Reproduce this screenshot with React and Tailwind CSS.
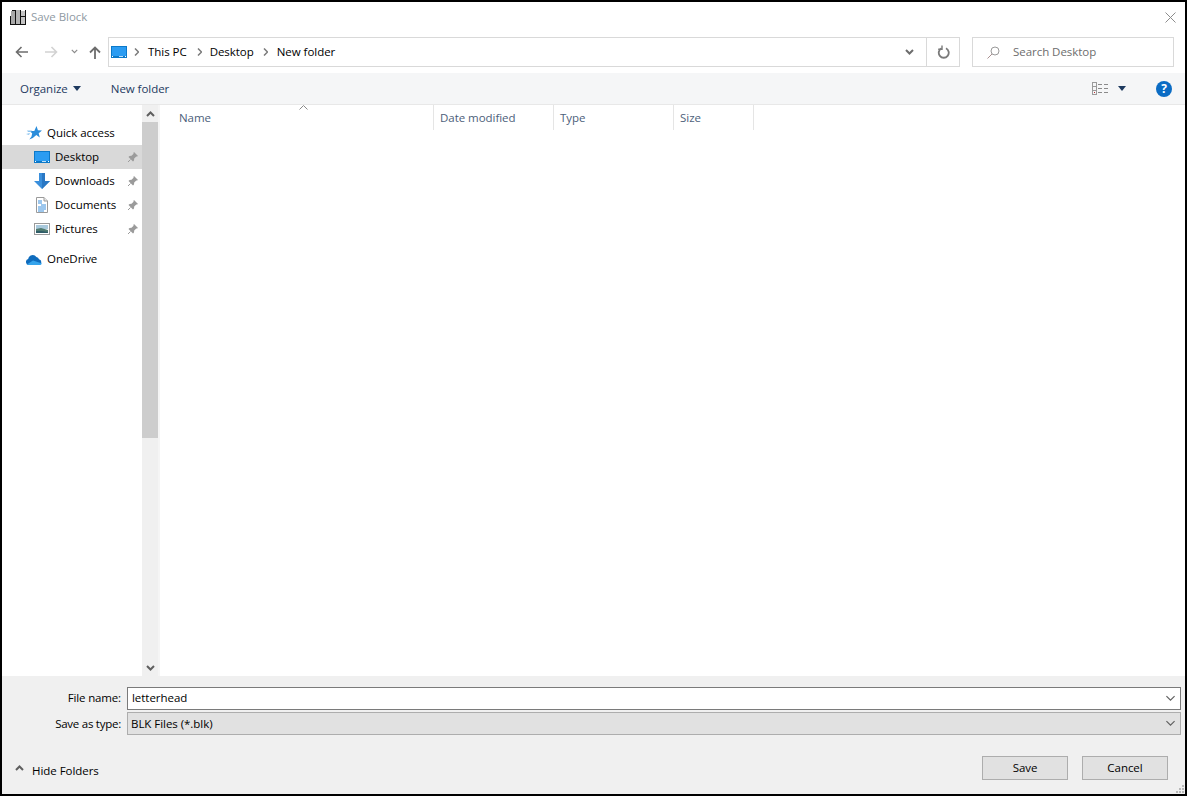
import React from 'react';

const font = { fontFamily: '"Open Sans", "Noto Sans", sans-serif' };

function Chevron({ dir = 'down', color = '#7a7a7a', w = 9, h = 6, sw = 2 }) {
  const d = dir === 'down' ? 'M1 1l3.500 3.500L8 1' : 'M1 5l3.500-3.500L8 5';
  return (
    <svg width={w} height={h} viewBox="0 0 9 6" fill="none" stroke={color} strokeWidth={sw}><path d={d} /></svg>
  );
}

function Crumb() {
  return (
    <svg width="5" height="8" viewBox="0 0 5 8" fill="none" stroke="#7a7a7a" strokeWidth="1.500"><path d="M1 .500L4.500 4 1 7.500" /></svg>
  );
}

function Monitor({ w = 16, h = 12 }) {
  return (
    <svg width={w} height={h} viewBox="0 0 16 12">
      <rect width="16" height="12" fill="#0c79c9" />
      <rect x="1" y="1" width="14" height="9.500" fill="#2b9cf2" />
      <rect x="1" y="10" width="14" height="1" fill="#0c79c9" />
      <rect x="1" y="10" width="1" height="1" fill="#fff" />
      <rect x="14" y="10" width="1" height="1" fill="#fff" />
      <rect x="8" y="10" width="4" height="1" fill="#bfe0f7" />
    </svg>
  );
}

function Pin() {
  return (
    <svg width="12" height="12" viewBox="0 0 12 12" fill="#9b9b9b">
      <path d="M7 1l4 4-1 .6-.7-.2L7.200 7.600l-.2 2L6 10.500 1.500 6l1-1 2-.2L6.600 2.700l-.2-.7z" />
      <path d="M3.500 8.500L1 11" stroke="#9b9b9b" fill="none" />
    </svg>
  );
}

function Star() {
  return (
    <svg width="16" height="14" viewBox="0 0 16 14">
      <path d="M10.500 0l1.400 4.300 4.100.2-3.300 2.700 1.100 4.300-3.500-2.400-3.500 2.800-3.500 1.700 2.200-3.200.7-3.200L3.500 5h4.800z" fill="#2b8ddb" />
      <path d="M1 4.500h5l-1 1.500H2zM0 8l4-1-1 2z" fill="#8cc4ef" />
    </svg>
  );
}

function Download() {
  return (
    <svg width="16" height="16" viewBox="0 0 16 16">
      <path d="M5 0h6v8h5l-8 8-8-8h5z" fill="#3a8fdc" />
      <path d="M8 0h3v8h5l-8 8z" fill="#2a78c4" />
    </svg>
  );
}

function Doc() {
  return (
    <svg width="12" height="16" viewBox="0 0 12 16">
      <path d="M.500.500h7.500l3.500 3.500v11.500H.500z" fill="#fff" stroke="#9a9a9a" />
      <path d="M8 .500V4h3.500" fill="#e8e8e8" stroke="#9a9a9a" />
      <path d="M2 4h4M2 6h4M5 8h5M2 10h8M2 12h8M2 14h6" stroke="#3a8fdc" strokeWidth="1" />
    </svg>
  );
}

function Picture() {
  return (
    <svg width="16" height="12" viewBox="0 0 16 12">
      <rect x=".5" y=".5" width="15" height="11" fill="#fff" stroke="#9a9a9a" />
      <rect x="2" y="2" width="12" height="4" fill="#a9c9dc" />
      <path d="M2 6l5-1 7 2v3H2z" fill="#4f7a6f" />
      <path d="M2 8l6 0 6 1v1H2z" fill="#2f5d68" />
    </svg>
  );
}

function Cloud() {
  return (
    <svg width="16" height="11" viewBox="0 0 16 11">
      <path d="M3 11a3 3 0 0 1-.8-5.900A4.500 4.500 0 0 1 10.400 3 3.500 3.500 0 0 1 13 5.300 2.900 2.900 0 0 1 13 11z" fill="#0f6cbd" />
      <path d="M3 11a2.900 2.900 0 0 1-1.800-.8L7 6.500l9 3A2.900 2.900 0 0 1 13 11z" fill="#35a4ec" />
    </svg>
  );
}

function NavItem({ icon, label, pin, active, indent = true, className = '' }) {
  return (
    <div className={`flex h-6 items-center ${active ? 'bg-[#d9d9d9]' : ''} ${className}`}>
      <div className={`flex shrink-0 justify-center ${indent ? 'ml-[32px] w-[16px]' : 'ml-[24px] w-[16px]'}`}>{icon}</div>
      <span className="ml-[5px] text-[11.5px] text-[#000] whitespace-nowrap">{label}</span>
      {pin && <span className="ml-auto mr-[3px] flex"><Pin /></span>}
    </div>
  );
}

function Header({ label, width, first }) {
  return (
    <div className={`relative flex h-[25px] shrink-0 items-center border-r border-[#e5e5e5] text-[11.5px] text-[#4c607a] ${first ? 'pl-[19px]' : 'pl-[6px]'}`} style={{ width }}>
      <span>{label}</span>
      {first && (
        <span className="absolute left-[139px] top-[0px] flex">
          <svg width="9" height="5" viewBox="0 0 9 5" fill="none" stroke="#8a8a8a"><path d="M.5 4.500L4.500.500l4 4" /></svg>
        </span>
      )}
    </div>
  );
}

export default function App() {
  return (
    <div className="h-[796px] w-[1187px] overflow-hidden bg-black pt-[2px] pb-[2px] px-[2px] tracking-[-0.04px]" style={font}>
      <div className="flex h-[792px] flex-col bg-white">
        {/* title bar */}
        <div className="flex h-[30px] shrink-0 items-center pl-[8px] pr-[9px]">
          <svg width="16" height="15" viewBox="0 0 16 15" className="shrink-0">
            <rect x="0" y="6" width="4" height="8" fill="#a8a8a8" />
            <rect x="1" y="1" width="4" height="13" fill="#a8a8a8" />
            <rect x="6" y="0" width="4" height="14" fill="#b5b5b5" />
            <rect x="11" y="1" width="4" height="13" fill="#c4c4c4" />
            <path d="M0 14.500h16M5.500 0v15M10.500 0v15M15.500 0v15M.5 6v9M2 .500h3M11 6.500h4" stroke="#111" strokeWidth="1" fill="none" />
          </svg>
          <span className="ml-[5px] text-[11.5px] text-[#8f9aa3]">Save Block</span>
          <svg width="11" height="11" viewBox="0 0 11 11" className="ml-auto" fill="none" stroke="#8c8c8c"><path d="M.5.500l10 10M10.500.500l-10 10" /></svg>
        </div>

        {/* nav bar */}
        <div className="flex h-[41px] shrink-0 items-start">
          <div className="flex h-[39px] w-[106px] shrink-0 items-center pl-[13px]">
            <svg width="13" height="12" viewBox="0 0 13 12" fill="none" stroke="#6d6d6d" strokeWidth="1.600"><path d="M13 6H1.500M6.500 1L1.500 6l5 5" /></svg>
            <svg width="13" height="12" viewBox="0 0 13 12" className="ml-[17px]" fill="none" stroke="#d2d2d2" strokeWidth="1.600"><path d="M0 6h11.500M6.500 1l5 5-5 5" /></svg>
            <span className="ml-[13px] flex"><Chevron color="#8a8a8a" w={7} h={5} sw={1.500} /></span>
            <svg width="12" height="13" viewBox="0 0 12 13" className="ml-[11px] mt-[2px]" fill="none" stroke="#6d6d6d" strokeWidth="1.800"><path d="M6 13V1.500M1 6.500l5-5 5 5" /></svg>
          </div>
          <div className="mt-[5px] flex h-[30px] w-[852px] shrink-0 items-center border border-[#d9d9d9]">
            <span className="ml-[2px] flex"><Monitor /></span>
            <span className="ml-[7px] flex"><Crumb /></span>
            <span className="ml-[9px] text-[11.5px] text-black">This PC</span>
            <span className="ml-[10px] flex"><Crumb /></span>
            <span className="ml-[8px] text-[11.5px] text-black">Desktop</span>
            <span className="ml-[9px] flex"><Crumb /></span>
            <span className="ml-[9px] text-[11.5px] text-black">New folder</span>
            <span className="ml-auto mr-[12px] flex"><Chevron color="#6d6d6d" /></span>
            <div className="flex h-full w-[33px] items-center justify-center border-l border-[#d9d9d9]">
              <svg width="13" height="14" viewBox="0 0 13 14" fill="none" stroke="#7a7a7a" strokeWidth="1.800"><path d="M4.500 3.300a5 5 0 1 0 4.500 0" /><path d="M5 .500V4.200H1.200" strokeWidth="1.400" /></svg>
            </div>
          </div>
          <div className="ml-[12px] mt-[5px] flex h-[30px] w-[202px] shrink-0 items-center border border-[#d9d9d9]">
            <svg width="13" height="13" viewBox="0 0 13 13" className="ml-[14px]" fill="none"><circle cx="8" cy="5" r="4" stroke="#9a9a9a" /><path d="M5 8l-4.500 4.500" stroke="#a98f8f" /></svg>
            <span className="ml-[13px] text-[11.5px] text-[#6d6d6d]">Search Desktop</span>
          </div>
        </div>

        {/* toolbar */}
        <div className="flex h-[32px] shrink-0 items-center border-b border-[#e8e8e8] bg-[#f5f6f7] pl-[18px]">
          <span className="text-[11.5px] text-[#1e3a5f]">Organize</span>
          <svg width="8" height="5" viewBox="0 0 8 5" className="ml-[5px]"><path d="M0 0h8L4 5z" fill="#1e3a5f" /></svg>
          <span className="ml-[30px] text-[11.5px] text-[#1e3a5f]">New folder</span>
          <svg width="17" height="14" viewBox="0 0 17 14" className="ml-auto" fill="none">
            <rect x=".5" y=".5" width="4" height="4" stroke="#9a9a9a" />
            <rect x=".5" y="4.500" width="4" height="4" stroke="#9a9a9a" />
            <rect x=".5" y="8.500" width="4" height="4" stroke="#9a9a9a" />
            <path d="M6 2.500h4M12 2.500h4M6 6.500h4M12 6.500h4M6 10.500h4M12 10.500h4" stroke="#8a8a8a" />
            <rect x="2" y="10" width="1" height="1" fill="#c03030" />
          </svg>
          <svg width="8" height="5" viewBox="0 0 8 5" className="ml-[9px]"><path d="M0 0h8L4 5z" fill="#1e3a5f" /></svg>
          <span className="ml-[30px] mr-[13px] flex h-[16px] w-[16px] items-center justify-center rounded-full bg-[#0b6cc4] text-[12px] font-bold leading-none text-white">?</span>
        </div>

        {/* main area */}
        <div className="flex min-h-0 flex-1">
          <div className="w-[140px] shrink-0 pt-[16px]">
            <NavItem indent={false} icon={<Star />} label="Quick access" />
            <NavItem active pin icon={<Monitor />} label="Desktop" />
            <NavItem pin icon={<Download />} label="Downloads" />
            <NavItem pin icon={<Doc />} label="Documents" />
            <NavItem pin icon={<Picture />} label="Pictures" />
            <NavItem indent={false} className="mt-[6px]" icon={<Cloud />} label="OneDrive" />
          </div>
          <div className="flex w-[16px] shrink-0 flex-col bg-[#f0f0f0]">
            <div className="flex h-[17px] shrink-0 items-center justify-center"><Chevron dir="up" color="#5f5f5f" /></div>
            <div className="h-[316px] shrink-0 bg-[#cdcdcd]" />
            <div className="flex-1" />
            <div className="flex h-[17px] shrink-0 items-center justify-center"><Chevron color="#5f5f5f" /></div>
          </div>
          <div className="w-[2px] shrink-0 bg-[#f5f5f5]" />
          <div className="flex min-w-0 flex-1 items-start">
            <Header first label="Name" width={274} />
            <Header label="Date modified" width={120} />
            <Header label="Type" width={120} />
            <Header label="Size" width={80} />
          </div>
        </div>

        {/* footer */}
        <div className="relative flex h-[118px] shrink-0 flex-col bg-[#f0f0f0]">
          <div className="mt-[11px] flex h-[22px] items-center pr-[4px]">
            <span className="w-[119px] shrink-0 text-right text-[11.5px] tracking-[-0.15px] text-black">File name:</span>
            <div className="ml-[6px] flex h-[23px] flex-1 items-center border border-[#7a7a7a] bg-white pl-[4px] pr-[4px]">
              <span className="text-[11.5px] text-black">letterhead</span>
              <span className="ml-auto flex"><Chevron color="#606060" w={11} h={7} sw={1} /></span>
            </div>
          </div>
          <div className="mt-[3px] flex h-[23px] items-center pr-[4px]">
            <span className="w-[119px] shrink-0 text-right text-[11.5px] tracking-[-0.25px] text-black">Save as type:</span>
            <div className="ml-[6px] flex h-[23px] flex-1 items-center border border-[#adadad] bg-[#e1e1e1] pl-[3px] pr-[4px]">
              <span className="text-[11.5px] text-black">BLK Files (*.blk)</span>
              <span className="ml-auto flex"><Chevron color="#606060" w={11} h={7} sw={1} /></span>
            </div>
          </div>
          <div className="mt-[21px] flex h-[24px] items-center">
            <span className="ml-[13px] flex"><Chevron dir="up" color="#5f5f5f" /></span>
            <span className="ml-[8px] mt-[6px] text-[11.5px] text-black">Hide Folders</span>
            <button className="ml-auto flex h-[24px] w-[86px] items-center justify-center border border-[#adadad] bg-[#e1e1e1] text-[11.5px] text-black">Save</button>
            <button className="ml-[14px] mr-[17px] flex h-[24px] w-[86px] items-center justify-center border border-[#adadad] bg-[#e1e1e1] text-[11.5px] text-black">Cancel</button>
          </div>
          <svg width="8" height="8" viewBox="0 0 8 8" className="absolute bottom-[1px] right-[1px]" fill="#b8b8b8">
            <rect x="6" y="0" width="2" height="2" /><rect x="3" y="3" width="2" height="2" /><rect x="6" y="3" width="2" height="2" />
            <rect x="0" y="6" width="2" height="2" /><rect x="3" y="6" width="2" height="2" /><rect x="6" y="6" width="2" height="2" />
          </svg>
        </div>
      </div>
    </div>
  );
}
